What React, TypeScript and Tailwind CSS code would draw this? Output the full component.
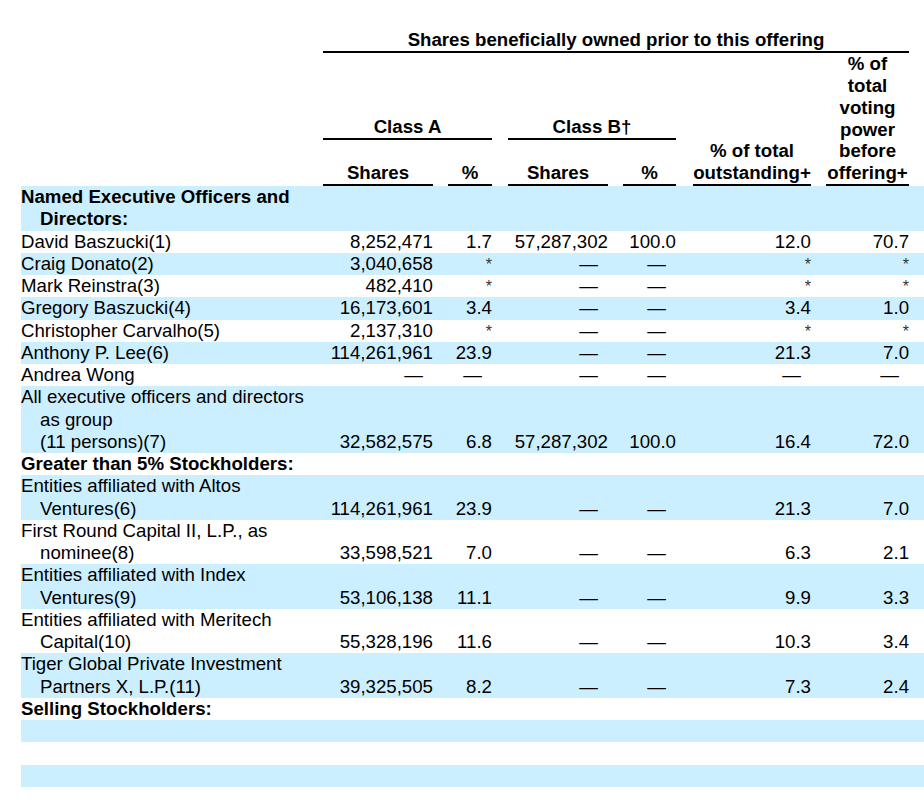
const BLUE = 'bg-[#ccefff]'

type Row = {
  name: React.ReactNode
  vals?: string[]
  bold?: boolean
  blue: boolean
}

const D = '—'

const rows: Row[] = [
  { name: <>Named Executive Officers and<br /><span className="pl-[19px]">Directors:</span></>, bold: true, blue: true },
  { name: 'David Baszucki(1)', vals: ['8,252,471', '1.7', '57,287,302', '100.0', '12.0', '70.7'], blue: false },
  { name: 'Craig Donato(2)', vals: ['3,040,658', '*', D, D, '*', '*'], blue: true },
  { name: 'Mark Reinstra(3)', vals: ['482,410', '*', D, D, '*', '*'], blue: false },
  { name: 'Gregory Baszucki(4)', vals: ['16,173,601', '3.4', D, D, '3.4', '1.0'], blue: true },
  { name: 'Christopher Carvalho(5)', vals: ['2,137,310', '*', D, D, '*', '*'], blue: false },
  { name: 'Anthony P. Lee(6)', vals: ['114,261,961', '23.9', D, D, '21.3', '7.0'], blue: true },
  { name: 'Andrea Wong', vals: [D, D, D, D, D, D], blue: false },
  {
    name: <>All executive officers and directors<br /><span className="pl-[19px]">as group</span><br /><span className="pl-[19px]">(11 persons)(7)</span></>,
    vals: ['32,582,575', '6.8', '57,287,302', '100.0', '16.4', '72.0'],
    blue: true,
  },
  { name: 'Greater than 5% Stockholders:', bold: true, blue: false },
  { name: <>Entities affiliated with Altos<br /><span className="pl-[19px]">Ventures(6)</span></>, vals: ['114,261,961', '23.9', D, D, '21.3', '7.0'], blue: true },
  { name: <>First Round Capital II, L.P., as<br /><span className="pl-[19px]">nominee(8)</span></>, vals: ['33,598,521', '7.0', D, D, '6.3', '2.1'], blue: false },
  { name: <>Entities affiliated with Index<br /><span className="pl-[19px]">Ventures(9)</span></>, vals: ['53,106,138', '11.1', D, D, '9.9', '3.3'], blue: true },
  { name: <>Entities affiliated with Meritech<br /><span className="pl-[19px]">Capital(10)</span></>, vals: ['55,328,196', '11.6', D, D, '10.3', '3.4'], blue: false },
  { name: <>Tiger Global Private Investment<br /><span className="pl-[19px]">Partners X, L.P.(11)</span></>, vals: ['39,325,505', '8.2', D, D, '7.3', '2.4'], blue: true },
  { name: 'Selling Stockholders:', bold: true, blue: false },
  { name: '\u00a0', blue: true },
  { name: '\u00a0', blue: false },
  { name: '\u00a0', blue: true },
  { name: '\u00a0', blue: false },
]

function Cell({ v }: { v?: string }) {
  if (v === '*') {
    return (
      <td className="align-bottom text-right p-0">
        <span className="text-[16px] leading-none text-[#333]">*</span>
      </td>
    )
  }
  return (
    <td className={`align-bottom text-right p-0 ${v === D ? 'pr-[10px]' : ''}`}>
      {v}
    </td>
  )
}

export default function App() {
  return (
    <div className="w-[924px] overflow-hidden bg-white pl-[21px] pt-[29px] text-black font-['Liberation_Sans',Arial,sans-serif] text-[18.67px] leading-[22.25px]">
      <table className="table-fixed border-collapse w-[903px]">
        <colgroup>
          <col className="w-[302px]" />
          <col className="w-[110px]" />
          <col className="w-[59px]" />
          <col className="w-[116px]" />
          <col className="w-[68px]" />
          <col className="w-[135px]" />
          <col className="w-[98px]" />
          <col className="w-[15px]" />
        </colgroup>
        <thead className="font-bold leading-[22px]">
          <tr>
            <td className="p-0" />
            <td colSpan={6} className="p-0">
              <div className="text-center border-b-2 border-black">Shares beneficially owned prior to this offering</div>
            </td>
            <td className="p-0" />
          </tr>
          <tr className="h-[87px]">
            <td className="p-0" />
            <td colSpan={2} className="p-0 align-bottom">
              <div className="text-center border-b-2 border-black">Class A</div>
            </td>
            <td colSpan={2} className="p-0 align-bottom">
              <div className="ml-[16px] text-center border-b-2 border-black">Class B†</div>
            </td>
            <td rowSpan={2} className="p-0 align-bottom">
              <div className="ml-[17px] text-center border-b-2 border-black">% of total<br />outstanding+</div>
            </td>
            <td rowSpan={2} className="p-0 align-bottom">
              <div className="ml-[15px] text-center border-b-2 border-black leading-[21.8px]">% of<br />total<br />voting<br />power<br />before<br />offering+</div>
            </td>
            <td rowSpan={2} className="p-0" />
          </tr>
          <tr className="h-[46px]">
            <td className="p-0" />
            <td className="p-0 align-bottom">
              <div className="text-center border-b-2 border-black">Shares</div>
            </td>
            <td className="p-0 align-bottom">
              <div className="ml-[15px] text-center border-b-2 border-black">%</div>
            </td>
            <td className="p-0 align-bottom">
              <div className="ml-[16px] text-center border-b-2 border-black">Shares</div>
            </td>
            <td className="p-0 align-bottom">
              <div className="ml-[15px] text-center border-b-2 border-black">%</div>
            </td>
          </tr>
        </thead>
        <tbody>
          {rows.map((r, i) => (
            <tr key={i} className={r.blue ? BLUE : 'bg-white'}>
              <td className={`p-0 whitespace-nowrap align-bottom ${r.bold ? 'font-bold' : ''}`}>{r.name}</td>
              {[0, 1, 2, 3, 4, 5].map((j) => (
                <Cell key={j} v={r.vals?.[j]} />
              ))}
              <td className="p-0" />
            </tr>
          ))}
        </tbody>
      </table>
    </div>
  )
}
